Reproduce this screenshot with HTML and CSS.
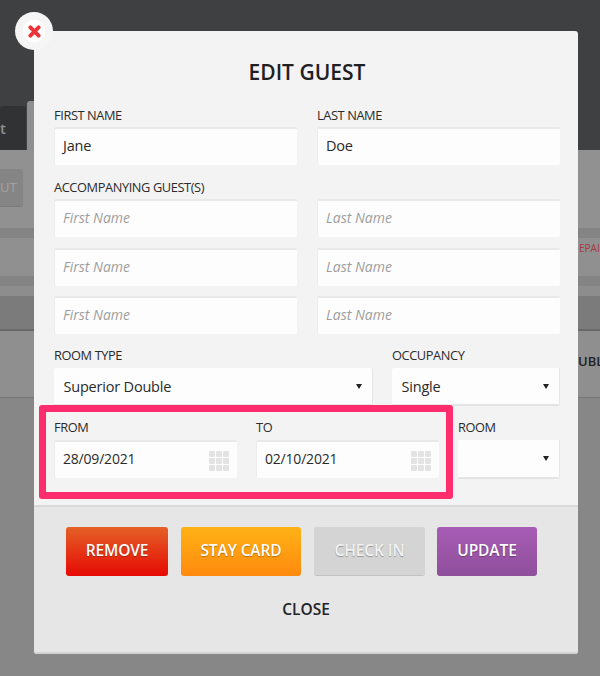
FILE: index.html
```html
<!DOCTYPE html>
<html lang="en">
  <head>
    <meta charset="UTF-8" />
    <meta name="viewport" content="width=device-width, initial-scale=1.0" />
    <title>Edit Guest</title>
    <link rel="stylesheet" href="styles.css">
  </head>
  <body>
    <!-- Page behind the dialog -->
    <div class="backdrop">
      <div class="top-bar">
        <div class="tab tab-dark">t</div>
        <div class="tab tab-light"></div>
      </div>
      <div class="toolbar"><span class="ghost-btn">UT</span></div>
      <div class="strip"></div>
      <div class="notice"><span class="notice-text">EPAIR</span></div>
      <div class="strip"></div>
      <div class="gap"></div>
      <div class="head-row"></div>
      <div class="room-row"><span class="room-text">UBLE</span></div>
      <div class="room-row-next"></div>
    </div>

    <!-- Dialog -->
    <div class="modal">
      <button class="close-x" aria-label="Close">
        <svg width="13" height="13" viewBox="0 0 13 13">
          <path d="M2.4 2.4 10.6 10.6M10.6 2.4 2.4 10.6" stroke="#ee3338" stroke-width="3.9" stroke-linecap="round" fill="none" />
        </svg>
      </button>

      <div class="modal-body">
        <h1>EDIT GUEST</h1>

        <div class="row">
          <div class="field half">
            <label>FIRST NAME</label>
            <div class="input">Jane</div>
          </div>
          <div class="field half">
            <label>LAST NAME</label>
            <div class="input">Doe</div>
          </div>
        </div>

        <label class="label-group">ACCOMPANYING GUEST(S)</label>
        <div class="guest-rows">
          <div class="row">
            <div class="input half placeholder">First Name</div>
            <div class="input half placeholder">Last Name</div>
          </div>
          <div class="row">
            <div class="input half placeholder">First Name</div>
            <div class="input half placeholder">Last Name</div>
          </div>
          <div class="row">
            <div class="input half placeholder">First Name</div>
            <div class="input half placeholder">Last Name</div>
          </div>
        </div>

        <div class="row row-room">
          <div class="field room-type">
            <label>ROOM TYPE</label>
            <div class="input select">Superior Double<span class="caret"></span></div>
          </div>
          <div class="field occupancy">
            <label>OCCUPANCY</label>
            <div class="input select">Single<span class="caret"></span></div>
          </div>
        </div>

        <div class="row row-dates">
          <div class="field date">
            <label>FROM</label>
            <div class="input date-input">28/09/2021<span class="cal"><i></i><i></i><i></i><i></i><i></i><i></i><i></i><i></i><i></i></span></div>
          </div>
          <div class="field date">
            <label>TO</label>
            <div class="input date-input">02/10/2021<span class="cal"><i></i><i></i><i></i><i></i><i></i><i></i><i></i><i></i><i></i></span></div>
          </div>
          <div class="field room-no">
            <label>ROOM</label>
            <div class="input select"><span class="caret"></span></div>
          </div>
        </div>
      </div>

      <div class="modal-footer">
        <div class="actions">
          <button class="btn btn-remove">REMOVE</button>
          <button class="btn btn-stay">STAY CARD</button>
          <button class="btn btn-checkin">CHECK IN</button>
          <button class="btn btn-update">UPDATE</button>
        </div>
        <div class="close-link">CLOSE</div>
      </div>

      <!-- Pink highlight round the dates -->
      <div class="highlight"></div>
    </div>
  </body>
</html>
```

FILE: styles.css
```css
* {
  box-sizing: border-box;
}

html,
body {
  margin: 0;
  height: 676px;
  overflow: hidden;
}

body {
  font-family: "Open Sans", "Noto Sans", sans-serif;
  background: #8b8b8b;
  position: relative;
}

/* page behind the dialog */
.backdrop {
  height: 676px;
  overflow: hidden;
  color: #222;
}

.top-bar {
  height: 150px;
  background: #3f4042;
  display: flex;
  align-items: flex-end;
  gap: 1px;
}

.tab {
  border-radius: 3px 3px 0 0;
}

.tab-dark {
  width: 26px;
  height: 44px;
  background: #313234;
  color: #8f8f8f;
  font-size: 15px;
  font-weight: 600;
  line-height: 44px;
}

.tab-light {
  width: 80px;
  height: 49px;
  background: #8f8f8f;
}

.toolbar {
  height: 78px;
  padding-top: 19px;
  background: #919191;
}

.ghost-btn {
  display: block;
  width: 23px;
  height: 38px;
  background: #858585;
  border-radius: 0 3px 3px 0;
  border-bottom: 1px solid #797979;
  color: #a2a2a2;
  font-size: 13px;
  line-height: 37px;
  text-align: right;
  padding-right: 9px;
  overflow: hidden;
}

.strip {
  height: 10px;
  background: #848484;
}

.notice {
  height: 38px;
  background: #909090;
  overflow: hidden;
  padding-left: 579px;
}

.notice-text {
  display: block;
  color: #a33b3f;
  font-size: 10px;
  line-height: 20px;
  white-space: nowrap;
}

.gap {
  height: 10px;
  background: #8d8d8d;
}

.head-row {
  height: 35px;
  background: #7b7b7b;
  border-bottom: 2px solid #686868;
}

.room-row {
  height: 67px;
  background: #8f8f8f;
  padding: 21px 0 0 578px;
  border-bottom: 1px solid #757575;
  overflow: hidden;
}

.room-text {
  display: block;
  font-size: 13px;
  font-weight: 600;
  line-height: 18px;
  white-space: nowrap;
}

.room-row-next {
  height: 278px;
  background: #878787;
}

/* dialog */
.modal {
  position: absolute;
  left: 34px;
  top: 31px;
  width: 544px;
  height: 623px;
  background: #f3f3f3;
  border-radius: 3px;
  color: #222;
}

.close-x {
  position: absolute;
  left: -19px;
  top: -19px;
  width: 38px;
  height: 38px;
  border: none;
  border-radius: 50%;
  background: radial-gradient(circle, #fff 0 11px, #f5f5f5 11.5px);
  display: flex;
  align-items: center;
  justify-content: center;
  padding: 0;
}

.modal-body {
  height: 474px;
  padding: 27px 18px 0 20px;
}

h1 {
  margin: 0 0 19px;
  font-size: 21px;
  line-height: 28px;
  font-weight: 600;
  text-align: center;
  color: #1f2023;
}

label {
  display: block;
  font-size: 12.8px;
  letter-spacing: -0.4px;
  line-height: 18px;
  padding-top: 1px;
  margin-bottom: 3px;
  color: #2b2b2b;
}

.row {
  display: flex;
  gap: 20px;
}

.half {
  width: 243px;
}

.input {
  position: relative;
  height: 38px;
  background: #fdfdfd;
  border-top: 2px solid #e9e9e9;
  border-left: 1px solid #ececec;
  border-radius: 2px;
  padding-left: 8px;
  font-size: 14.5px;
  letter-spacing: -0.2px;
  line-height: 33px;
  color: #2a2a2a;
}

.placeholder {
  font-style: italic;
  color: #9d9d9d;
  font-size: 14px;
  letter-spacing: 0;
}

.label-group {
  margin-top: 12px;
}

.guest-rows {
  display: flex;
  flex-direction: column;
  gap: 10.67px;
}

.row-room {
  margin-top: 11.5px;
  gap: 19px;
}

.row-room label {
  padding-top: 0;
  margin-bottom: 4px;
}

.room-type {
  width: 319px;
}

.occupancy {
  width: 168px;
}

.select {
  border-top: none;
  border-left: none;
  border-right: 1px solid #e6e6e6;
  border-bottom: 2px solid #e4e4e4;
  padding-left: 9.5px;
  line-height: 38px;
}

.caret {
  position: absolute;
  right: 10px;
  top: 16px;
  border-left: 3.5px solid transparent;
  border-right: 3.5px solid transparent;
  border-top: 5px solid #222;
}

.row-dates {
  margin-top: 11px;
  gap: 19px;
}

.row-dates label {
  margin-bottom: 4px;
}

.row-dates .select {
  height: 39px;
}

.date {
  width: 183px;
}

.date-input {
  font-size: 14px;
  letter-spacing: -0.2px;
}

.room-no {
  width: 102px;
}

.cal {
  position: absolute;
  right: 8px;
  top: 9px;
  width: 20px;
  display: grid;
  grid-template-columns: repeat(3, 6px);
  gap: 1px;
}

.cal i {
  height: 6px;
  background: #e3e3e3;
  border-radius: 1px;
}

.modal-footer {
  height: 149px;
  background: #e6e6e6;
  border-top: 2px solid #d9d9d9;
  border-radius: 0 0 3px 3px;
  border-bottom: 2px solid #d2d2d2;
  padding-top: 20px;
}

.actions {
  display: flex;
  gap: 13px;
  padding-left: 32px;
}

.btn {
  height: 49px;
  border: none;
  border-radius: 3px;
  color: #fdfdfd;
  font-family: inherit;
  font-size: 15.5px;
  font-weight: 600;
  letter-spacing: -0.1px;
  text-shadow: 0 1px 1px rgba(0, 0, 0, 0.3);
  padding: 0 0 3px;
}

.btn-remove {
  width: 102px;
  background: linear-gradient(#e46026, #e60a04);
}

.btn-stay {
  width: 120px;
  background: linear-gradient(#ffb216, #ff8a0e);
}

.btn-checkin {
  width: 111px;
  background: #d4d4d4;
  border-bottom: 1px solid #c2c2c2;
  color: #f2f2f2;
}

.btn-update {
  width: 100px;
  margin-left: -1px;
  background: linear-gradient(#a75cb5, #8f4f9b);
}

.close-link {
  margin-top: 21px;
  text-align: center;
  font-size: 15.5px;
  font-weight: 600;
  line-height: 24px;
  color: #222327;
}

.highlight {
  position: absolute;
  left: 5px;
  top: 374px;
  width: 414px;
  height: 94px;
  border: 7px solid #ff2d6d;
  border-radius: 3px;
}
```
